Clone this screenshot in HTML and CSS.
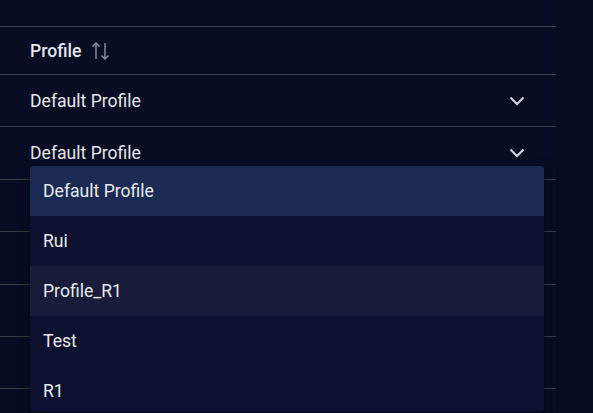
FILE: index.html
```html
<!DOCTYPE html>
<html lang="en">
<head>
  <meta charset="UTF-8" />
  <meta name="viewport" content="width=device-width, initial-scale=1.0"/>
  <title>Profiles</title>
  <link rel="stylesheet" href="styles.css">
</head>
<body>
  <div class="panel">
    <div class="table">
      <div class="row head">
        <span class="title">Profile</span>
        <svg class="sort" width="20" height="18" viewBox="0 0 20 18">
          <path d="M5 17V1M1.5 4.5L5 1l3.5 3.5" />
          <path d="M14 1v16M10.5 13.5L14 17l3.5-3.5" />
        </svg>
      </div>

      <div class="row">
        <span>Default Profile</span>
        <svg class="chev" width="16" height="10" viewBox="0 0 16 10"><path d="M1.5 1.5L8 8l6.5-6.5" /></svg>
      </div>

      <div class="row open">
        <span>Default Profile</span>
        <svg class="chev" width="16" height="10" viewBox="0 0 16 10"><path d="M1.5 1.5L8 8l6.5-6.5" /></svg>

        <ul class="menu">
          <li class="selected">Default Profile</li>
          <li>Rui</li>
          <li class="hover">Profile_R1</li>
          <li>Test</li>
          <li>R1</li>
        </ul>
      </div>

      <div class="row"></div>
      <div class="row"></div>
      <div class="row"></div>
      <div class="row"></div>
    </div>
  </div>
</body>
</html>
```

FILE: styles.css
```css
body {
  margin: 0;
  background-color: #060b1d;
  font-family: Roboto, "Noto Sans", sans-serif;
  color: #e6e8ef;
  overflow: hidden;
}

.panel {
  width: 556px;
  height: 413px;
  background-color: #080d23;
  padding-top: 26px;
  box-sizing: border-box;
}

.table {
  border-top: 1px solid #3b3e47;
}

.row {
  position: relative;
  display: flex;
  align-items: center;
  justify-content: space-between;
  height: 51.4px;
  padding: 0 31px 0 30px;
  border-bottom: 1px solid #3b3e47;
  font-size: 17.6px;
}

.row.head {
  height: 47px;
  justify-content: flex-start;
  gap: 10px;
}

.title {
  font-weight: 500;
}

.sort path {
  fill: none;
  stroke: #8d919c;
  stroke-width: 1.4;
}

.chev path {
  fill: none;
  stroke: #d6d8de;
  stroke-width: 2;
}

.menu {
  position: absolute;
  top: 39px;
  left: 30px;
  width: 514px;
  max-height: 246px;
  overflow: hidden;
  margin: 0;
  padding: 0;
  list-style: none;
  background-color: #0d1130;
  border-radius: 4px;
  box-shadow: 0 5px 5px -3px rgba(0,0,0,.3), 0 8px 10px 1px rgba(0,0,0,.2), 0 3px 14px 2px rgba(0,0,0,.18);
  z-index: 2;
}

.menu li {
  height: 50px;
  line-height: 50px;
  padding: 0 13px;
  font-size: 17.6px;
  color: #e8eaf0;
}

.menu li.selected {
  background-color: #1b2a52;
}

.menu li.hover {
  background-color: #181c38;
}
```
